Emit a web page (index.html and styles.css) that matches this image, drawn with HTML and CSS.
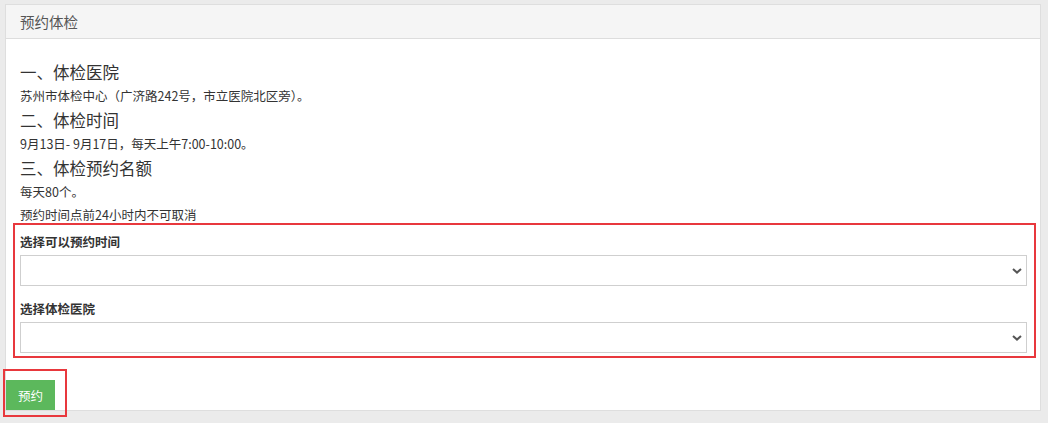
FILE: index.html
```html
<!DOCTYPE html>
<html lang="zh-CN">
<head>
    <meta charset="UTF-8">
    <meta name="viewport" content="width=device-width, initial-scale=1.0">
    <title>预约体检</title>
    <link rel="stylesheet" href="styles.css">
</head>
<body>
    <div class="panel">
        <div class="panel-heading">预约体检</div>
        <div class="panel-body">
            <h4>一、体检医院</h4>
            <p>苏州市体检中心（广济路242号，市立医院北区旁）。</p>
            <h4>二、体检时间</h4>
            <p>9月13日- 9月17日，每天上午7:00-10:00。</p>
            <h4>三、体检预约名额</h4>
            <p>每天80个。</p>
            <p class="notice">预约时间点前24小时内不可取消</p>

            <div class="form-box">
                <div class="form-group">
                    <label for="time">选择可以预约时间</label>
                    <div class="select-wrap">
                        <select id="time"></select>
                        <svg class="chevron" width="10" height="6" viewBox="0 0 10 6"><path d="M1 1l4 3.6L9 1" fill="none" stroke="#555" stroke-width="2"/></svg>
                    </div>
                </div>
                <div class="form-group">
                    <label for="hospital">选择体检医院</label>
                    <div class="select-wrap">
                        <select id="hospital"></select>
                        <svg class="chevron" width="10" height="6" viewBox="0 0 10 6"><path d="M1 1l4 3.6L9 1" fill="none" stroke="#555" stroke-width="2"/></svg>
                    </div>
                </div>
            </div>

            <div class="actions">
                <button class="btn-success">预约</button>
                <span class="mark"></span>
            </div>
        </div>
    </div>
</body>
</html>
```

FILE: styles.css
```css
body {
    margin: 0;
    padding: 4px 7px 12px 5px;
    background-color: #ebebeb;
    font-family: "Microsoft YaHei", "Noto Sans CJK SC", sans-serif;
    color: #333;
}
.panel {
    background-color: #fff;
    border: 1px solid #dedede;
}
.panel-heading {
    height: 33px;
    line-height: 33px;
    padding-left: 14px;
    background-color: #f5f5f5;
    border-bottom: 1px solid #dddddd;
    font-size: 14.5px;
    color: #555;
}
.panel-body {
    padding: 21px 4px 0 14px;
}
h4 {
    margin: 0;
    font-size: 16.5px;
    font-weight: normal;
    line-height: 24px;
}
p {
    margin: 0;
    font-size: 12.5px;
    line-height: 24px;
}
p.notice {
    margin-top: 3px;
    line-height: 16px;
}
.form-box {
    margin-left: -7px;
    border: 2px solid #e8383d;
    padding: 8px 7px 3px 5px;
}
.form-group + .form-group {
    margin-top: 14px;
}
label {
    display: block;
    font-size: 12.5px;
    font-weight: bold;
    line-height: 18px;
    margin-bottom: 4px;
}
.select-wrap {
    position: relative;
}
select {
    display: block;
    width: 100%;
    height: 31px;
    margin: 0;
    border: 1px solid #cfcfcf;
    background-color: #fff;
    appearance: none;
    -webkit-appearance: none;
    font-family: inherit;
}
.chevron {
    position: absolute;
    right: 5px;
    top: 13px;
}
.actions {
    position: relative;
    margin: 22px 0 0 -14px;
    height: 30px;
}
.btn-success {
    display: block;
    width: 49px;
    height: 30px;
    padding: 0;
    border: none;
    background-color: #5cb85c;
    color: #fff;
    font-family: inherit;
    font-size: 12.5px;
}
.mark {
    position: absolute;
    left: -3px;
    top: -11px;
    width: 60px;
    height: 44px;
    border: 2px solid #e8383d;
}
```
